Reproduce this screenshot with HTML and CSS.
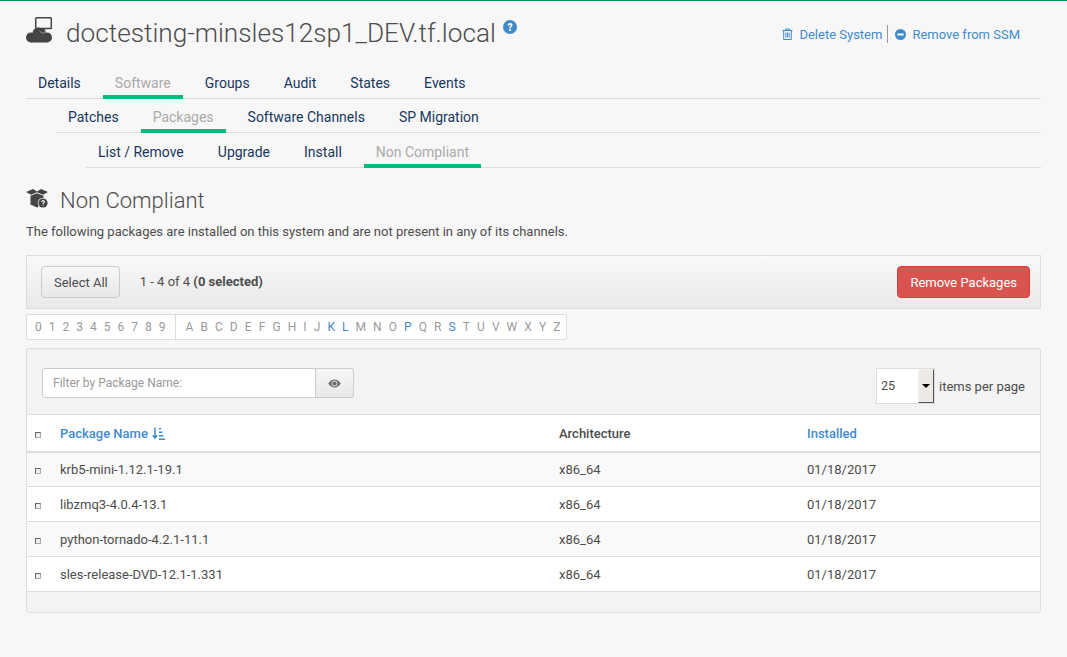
FILE: index.html
```html
<!DOCTYPE html>
<html lang="en">
<head>
  <title>Non Compliant</title>
  <link rel="stylesheet" href="styles.css">
</head>
<body>
  <div class="container">
    <div class="system-header">
      <svg class="system-icon" width="26" height="26" viewBox="0 0 26 26">
        <rect x="9.700" y=".8" width="15.600" height="10.800" rx="1" fill="#f7f7f7" stroke="#444" stroke-width="1.500"/>
        <circle cx="5" cy="20.500" r="5" fill="#444"/>
        <circle cx="12.500" cy="16.500" r="6" fill="#444"/>
        <circle cx="21" cy="20.500" r="5" fill="#444"/>
        <rect x="5" y="19" width="16" height="6.500" fill="#444"/>
        <path d="M14.500 12h4l1.500 3-3.500 2.500L13 15z" fill="#444"/>
        <path d="M13.500 14l3 2.500 3-2.500" fill="none" stroke="#999" stroke-width="1"/>
      </svg>
      <h1>doctesting-minsles12sp1_DEV.tf.local</h1>
      <svg class="help-icon" width="14" height="14" viewBox="0 0 14 14">
        <circle cx="7" cy="7" r="7" fill="#428bca"/>
        <path d="M4.600 5.400c0-1.500 1.100-2.400 2.500-2.400s2.400.9 2.400 2.100c0 1.800-1.700 1.700-1.700 3.100H6.200c0-2 1.500-2 1.500-3 0-.4-.3-.7-.7-.7-.5 0-.8.300-.8.900zM6.200 9.100h1.700v1.800H6.200z" fill="#fff"/>
      </svg>
      <div class="system-actions">
        <a href="#" class="action">
          <svg width="11" height="12" viewBox="0 0 11 12">
            <path d="M.5 2.500h10M3.500 2.500V1h4v1.500M1.700 2.500v9h7.600v-9M3.800 4.500v5M5.500 4.500v5M7.200 4.500v5" fill="none" stroke="#428bca" stroke-width="1"/>
          </svg>
          Delete System
        </a>
        <span class="action-sep"></span>
        <a href="#" class="action">
          <svg width="11" height="11" viewBox="0 0 11 11">
            <circle cx="5.500" cy="5.500" r="5.500" fill="#428bca"/>
            <rect x="2.300" y="4.500" width="6.400" height="2" fill="#f7f7f7"/>
          </svg>
          Remove from SSM
        </a>
      </div>
    </div>

    <ul class="tabs">
      <li><a href="#">Details</a></li>
      <li class="active"><a href="#">Software</a></li>
      <li><a href="#">Groups</a></li>
      <li><a href="#">Audit</a></li>
      <li><a href="#">States</a></li>
      <li><a href="#">Events</a></li>
    </ul>
    <ul class="tabs tabs-second">
      <li><a href="#">Patches</a></li>
      <li class="active"><a href="#">Packages</a></li>
      <li><a href="#">Software Channels</a></li>
      <li><a href="#">SP Migration</a></li>
    </ul>
    <ul class="tabs tabs-third">
      <li><a href="#">List / Remove</a></li>
      <li><a href="#">Upgrade</a></li>
      <li><a href="#">Install</a></li>
      <li class="active"><a href="#">Non Compliant</a></li>
    </ul>

    <div class="page-heading">
      <svg class="heading-icon" width="22" height="19" viewBox="0 0 22 19">
        <path d="M0 3l7-3 4 2.500L15 0l7 3-5 2.800-6-2.600-6 2.600z" fill="#444"/>
        <path d="M4.500 6.800L11 4.200l6.500 2.600V14L11 18.500l-6.500-3z" fill="#444"/>
        <circle cx="17" cy="14" r="5.300" fill="#f7f7f7"/>
        <circle cx="17" cy="14" r="4.600" fill="#444"/>
        <path d="M15.200 12.900c0-1 .8-1.700 1.900-1.700s1.800.7 1.800 1.500c0 1.200-1.300 1.200-1.300 2.300h-1c0-1.500 1.200-1.500 1.200-2.200 0-.3-.2-.6-.7-.6s-.8.300-.8.700zM16.600 15.500h1v1.100h-1z" fill="#fff"/>
      </svg>
      <h2>Non Compliant</h2>
    </div>
    <p class="intro">The following packages are installed on this system and are not present in any of its channels.</p>

    <div class="toolbar">
      <button class="btn btn-select">Select All</button>
      <span class="count">1 - 4 of 4 <strong>(0 selected)</strong></span>
      <button class="btn btn-danger">Remove Packages</button>
    </div>

    <div class="alphabet">
      <div class="alpha-group alpha-digits">
        <span>0</span><span>1</span><span>2</span><span>3</span><span>4</span><span>5</span><span>6</span><span>7</span><span>8</span><span>9</span>
      </div>
      <div class="alpha-group alpha-letters">
        <span>A</span><span>B</span><span>C</span><span>D</span><span>E</span><span>F</span><span>G</span><span>H</span><span>I</span><span>J</span><a href="#">K</a><a href="#">L</a><span>M</span><span>N</span><span>O</span><a href="#">P</a><span>Q</span><span>R</span><a href="#">S</a><span>T</span><span>U</span><span>V</span><span>W</span><span>X</span><span>Y</span><span>Z</span>
      </div>
    </div>

    <div class="panel">
      <div class="panel-head">
        <div class="filter">
          <input type="text" class="filter-input" placeholder="Filter by Package Name:">
          <button class="filter-btn">
            <svg width="13" height="9" viewBox="0 0 13 9">
              <path d="M.3 4.500C2 1.700 4.200.4 6.500.4s4.500 1.300 6.200 4.100C11 7.300 8.800 8.600 6.500 8.600S2 7.300.3 4.500z" fill="#666"/>
              <circle cx="6.500" cy="4.500" r="3" fill="#ddd"/>
              <circle cx="6.500" cy="4.500" r="2.100" fill="#666"/>
            </svg>
          </button>
        </div>
        <div class="per-page">
          <div class="page-select">
            <span class="page-value">25</span>
            <span class="page-arrow"></span>
          </div>
          <span>items per page</span>
        </div>
      </div>
      <table>
        <thead>
          <tr>
            <th class="col-check"><input type="checkbox"></th>
            <th class="col-name">
              <a href="#">Package Name</a>
              <svg class="sort-icon" width="13" height="13" viewBox="0 0 13 13">
                <path d="M3 .5v10M.8 8.300 3 11l2.200-2.700" fill="none" stroke="#428bca" stroke-width="1.500"/>
                <path d="M7 1h2v1.500H7zM7 4.500h3.500V6H7zM7 8h4.500v1.500H7zM7 11.500h6V13H7z" fill="#428bca"/>
              </svg>
            </th>
            <th class="col-arch">Architecture</th>
            <th><a href="#">Installed</a></th>
          </tr>
        </thead>
        <tbody>
          <tr>
            <td class="col-check"><input type="checkbox"></td>
            <td>krb5-mini-1.12.1-19.1</td>
            <td>x86_64</td>
            <td>01/18/2017</td>
          </tr>
          <tr>
            <td class="col-check"><input type="checkbox"></td>
            <td>libzmq3-4.0.4-13.1</td>
            <td>x86_64</td>
            <td>01/18/2017</td>
          </tr>
          <tr>
            <td class="col-check"><input type="checkbox"></td>
            <td>python-tornado-4.2.1-11.1</td>
            <td>x86_64</td>
            <td>01/18/2017</td>
          </tr>
          <tr>
            <td class="col-check"><input type="checkbox"></td>
            <td>sles-release-DVD-12.1-1.331</td>
            <td>x86_64</td>
            <td>01/18/2017</td>
          </tr>
        </tbody>
      </table>
      <div class="panel-foot"></div>
    </div>
  </div>
</body>
</html>
```

FILE: styles.css
```css
body {
  margin: 0;
  font-family: Roboto, "Liberation Sans", sans-serif;
  font-size: 13px;
  color: #4d4d4d;
  background-color: #f7f7f7;
  border-top: 1px solid #008b62;
}

a {
  text-decoration: none;
}

.container {
  padding: 0 26px 45px;
}

/* System header */
.system-header {
  display: flex;
  align-items: flex-start;
  height: 64px;
  padding-top: 16px;
  box-sizing: border-box;
}

.system-icon {
  flex: none;
  margin-right: 14px;
}

h1 {
  margin: 0 7px 0 0;
  font-size: 26.200px;
  font-weight: 300;
  line-height: 33px;
  color: #4d4d4d;
}

.help-icon {
  flex: none;
  margin-top: 3px;
}

.system-actions {
  display: flex;
  align-items: center;
  margin-left: auto;
  margin-right: 21px;
  margin-top: 8px;
}

.action {
  display: flex;
  align-items: center;
  gap: 6px;
  font-size: 13px;
  color: #428bca;
}

.action-sep {
  width: 1px;
  height: 18px;
  margin: 0 7px 0 5px;
  background-color: #999;
}

/* Tabs */
.tabs {
  display: flex;
  gap: 10px;
  margin: 0;
  padding: 0;
  list-style: none;
  border-bottom: 1px solid #ddd;
}

.tabs li {
  height: 34px;
  padding: 0 12px;
  box-sizing: border-box;
  border-bottom: 4px solid transparent;
  margin-bottom: -1px;
  line-height: 36px;
  font-size: 14px;
}

.tabs a {
  color: #17385c;
}

.tabs .active {
  border-bottom-color: #00bd7e;
}

.tabs .active a {
  color: #aaa;
}

.tabs-second {
  margin-left: 30px;
}

.tabs-third {
  margin-left: 60px;
}

.tabs-third li {
  height: 35px;
  line-height: 38px;
}

/* Page heading */
.page-heading {
  display: flex;
  align-items: center;
  gap: 12px;
  margin-top: 17px;
  height: 30px;
}

.heading-icon {
  flex: none;
  margin-top: -3px;
}

h2 {
  margin: 0;
  font-size: 22px;
  font-weight: 300;
  color: #4d4d4d;
}

.intro {
  margin: 8px 0 14px;
  line-height: 18px;
  color: #4d4d4d;
}

/* Toolbar */
.toolbar {
  display: flex;
  align-items: center;
  height: 54px;
  box-sizing: border-box;
  padding: 0 10px 0 14px;
  border: 1px solid #ddd;
  background: linear-gradient(#f9f9f9, #e9e9e9);
}

.btn {
  height: 32px;
  padding: 1px 12px 0;
  border: 1px solid #ccc;
  border-radius: 4px;
  font-family: inherit;
  font-size: 13px;
  color: #4d4d4d;
  background: linear-gradient(#f7f7f7, #e8e8e8);
}

.btn-select {
  padding-right: 11px;
}

.btn-danger {
  margin-left: auto;
  color: #fff;
  border-color: #d43f3a;
  background: #d9534f;
}

.count {
  margin-left: 20px;
  margin-top: -2px;
}

/* Alphabet pager */
.alphabet {
  display: inline-flex;
  height: 26px;
  box-sizing: border-box;
  margin-top: 5px;
  border: 1px solid #ddd;
  border-radius: 2px;
  background-color: #fff;
  font-size: 12px;
  line-height: 24px;
  color: #999;
  vertical-align: top;
}

.alpha-group {
  display: flex;
}

.alpha-digits {
  gap: 7px;
  padding: 0 9px 0 8px;
  border-right: 1px solid #ddd;
}

.alpha-letters {
  gap: 7.080px;
  padding: 0 6px 0 10px;
}

.alpha-group a {
  color: #428bca;
}

/* Panel */
.panel {
  margin-top: 8px;
  border: 1px solid #ddd;
  border-radius: 3px;
  background-color: #f3f3f3;
}

.panel-head {
  display: flex;
  justify-content: space-between;
  align-items: flex-start;
  height: 65px;
  box-sizing: border-box;
  padding: 19px 15px 0;
}

.filter {
  display: flex;
  height: 30px;
}

.filter-input {
  width: 274px;
  box-sizing: border-box;
  padding: 0 10px;
  border: 1px solid #ccc;
  border-radius: 3px 0 0 3px;
  font-family: inherit;
  font-size: 12px;
  background-color: #fff;
}

.filter-input::placeholder {
  color: #999;
}

.filter-btn {
  width: 38px;
  padding: 0;
  border: 1px solid #ccc;
  border-left: none;
  border-radius: 0 3px 3px 0;
  background: linear-gradient(#f7f7f7, #e8e8e8);
}

.per-page {
  display: flex;
  align-items: center;
  gap: 4px;
}

.page-select {
  display: flex;
  width: 59px;
  height: 36px;
  box-sizing: border-box;
  border: 1px solid #ddd;
  background-color: #fff;
}

.page-value {
  flex: 1;
  padding-left: 4px;
  line-height: 34px;
  font-size: 12.500px;
}

.page-arrow {
  position: relative;
  width: 16px;
  box-sizing: border-box;
  border: 1px solid;
  border-color: #f5f3ef #555 #555 #f5f3ef;
  background-color: #edeae5;
}

.page-arrow::after {
  content: "";
  position: absolute;
  left: 3px;
  top: 14px;
  border: 4px solid transparent;
  border-top-color: #000;
  border-bottom: none;
}

/* Table */
table {
  width: 100%;
  border-collapse: collapse;
  background-color: #fff;
}

th,
td {
  padding: 0;
  text-align: left;
  vertical-align: middle;
}

thead tr {
  height: 37px;
  border-top: 1px solid #ddd;
  border-bottom: 2px solid #ddd;
}

th {
  padding-top: 1px;
  font-size: 13px;
  font-weight: 500;
  color: #4d4d4d;
}

th a {
  color: #428bca;
}

tbody tr {
  height: 35px;
  border-bottom: 1px solid #ddd;
}

tbody tr:nth-child(odd) {
  background-color: #f9f9f9;
}

.col-check {
  width: 33px;
  padding-left: 8px;
  box-sizing: border-box;
}

.col-name {
  width: 499px;
}

.col-arch {
  width: 248px;
}

.sort-icon {
  vertical-align: -2px;
  margin-left: 1px;
}

input[type="checkbox"] {
  appearance: none;
  display: block;
  width: 6px;
  height: 6px;
  margin: 4px 0 0;
  border: 1px solid #666;
  border-right-color: #aaa;
  border-bottom-color: #aaa;
  border-radius: 0;
  background-color: #eee;
}

.panel-foot {
  height: 20px;
}
```
